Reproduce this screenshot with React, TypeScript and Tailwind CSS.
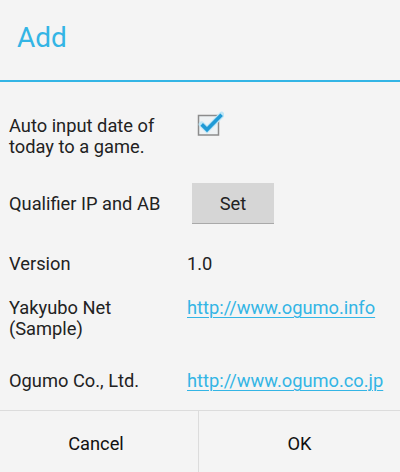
import React from "react";

const Row: React.FC<{ label: React.ReactNode; className?: string; children?: React.ReactNode }> = ({
  label,
  className = "",
  children,
}) => (
  <div className={`flex ${className}`}>
    <div className="w-[178px] shrink-0">{label}</div>
    <div className="flex-1">{children}</div>
  </div>
);

const Link: React.FC<{ href: string }> = ({ href }) => (
  <a href={href} className="text-[#33b5e5] underline underline-offset-[3px] decoration-1">
    {href}
  </a>
);

const App: React.FC = () => {
  return (
    <div
      className="w-[400px] h-[472px] bg-[#f4f4f4] flex flex-col text-[18.3px] leading-[21px] text-[#222222]"
      style={{ fontFamily: "Roboto, 'Noto Sans', sans-serif" }}
    >
      {/* title */}
      <div className="h-[82px] shrink-0 border-b-2 border-[#33b5e5] pl-[17px] pt-[24px]">
        <div className="text-[28px] leading-[28px] text-[#33b5e5]">Add</div>
      </div>

      {/* settings */}
      <div className="flex-1 flex flex-col pl-[9px] pt-[33px]">
        <Row
          label={
            <>
              Auto input date of
              <br />
              today to a game.
            </>
          }
        >
          <svg width="28" height="26" viewBox="0 0 28 26" className="ml-[9px] -mt-[4px]">
            <rect x="2.5" y="4.5" width="20" height="19.5" fill="#eef2f4" stroke="#8c8c8c" strokeWidth="1.5" />
            <path d="M5.7 13.4 L11 18.6 L25.6 3.8" fill="none" stroke="#bfe6f6" strokeWidth="6" strokeLinecap="round" />
            <path d="M5.7 13.4 L11 18.6 L25.6 3.8" fill="none" stroke="#1f9ad6" strokeWidth="3.6" />
          </svg>
        </Row>

        <Row label="Qualifier IP and AB" className="mt-[26px] items-center">
          <button className="ml-[5px] w-[82px] h-[40px] bg-[#d6d6d6] shadow-[0_1px_0_#a9a9a9] text-[18.3px] text-[#222222]">
            Set
          </button>
        </Row>

        <Row label="Version" className="mt-[30px]">
          1.0
        </Row>

        <Row
          label={
            <>
              Yakyubo Net
              <br />
              (Sample)
            </>
          }
          className="mt-[23px]"
        >
          <Link href="http://www.ogumo.info" />
        </Row>

        <Row label="Ogumo Co., Ltd." className="mt-[31px]">
          <Link href="http://www.ogumo.co.jp" />
        </Row>
      </div>

      {/* buttons */}
      <div className="h-[62px] shrink-0 border-t border-[#dcdcdc] flex">
        <button className="w-[199px] border-r border-[#dcdcdc] pt-[3px] pr-[6px] text-[#111111]">Cancel</button>
        <button className="flex-1 pt-[3px] text-[#111111]">OK</button>
      </div>
    </div>
  );
};

export default App;
